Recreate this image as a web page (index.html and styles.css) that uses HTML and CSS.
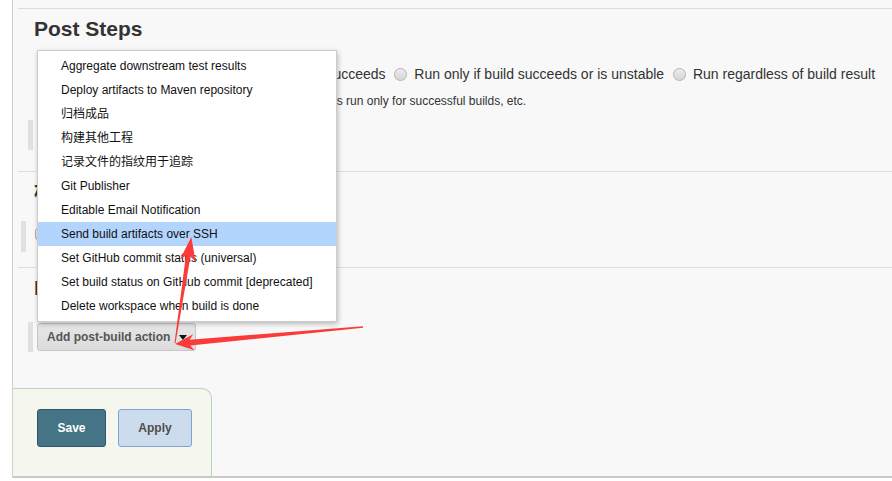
FILE: index.html
```html
<!DOCTYPE html>
<html lang="en">
<head>
<meta charset="utf-8">
<title>Post Steps</title>
<link rel="stylesheet" href="styles.css">
</head>
<body>
<div class="screen">
  <div class="page">
    <section class="section section-post">
      <h2 class="section-title">Post Steps</h2>
      <div class="opts">
        <div class="opts-row"><input class="radio" type="radio" name="ps"> Run only if build succeeds <input class="radio" type="radio" name="ps"> Run only if build succeeds or is unstable <input class="radio" type="radio" name="ps"> Run regardless of build result</div>
        <div class="opts-help">Should the post-build steps run only for successful builds, etc.</div>
      </div>
      <div class="repeat repeat-post">
        <span class="handle"></span>
        <button class="btn-add" type="button">Add step<span class="caret"></span></button>
      </div>
    </section>
    <section class="section section-settings">
      <h2 class="section-title">构建设置</h2>
      <div class="repeat repeat-check">
        <span class="handle"></span>
        <input class="checkbox" type="checkbox" aria-label="E-mail Notification">
      </div>
    </section>
    <section class="section section-actions">
      <h2 class="section-title">Post-build Actions</h2>
      <div class="repeat repeat-actions">
        <span class="handle"></span>
        <button class="btn-add" type="button">Add post-build action<span class="caret"></span></button>
      </div>
    </section>
    <div class="bottom-bar">
      <button class="btn btn-save" type="button">Save</button>
      <button class="btn btn-apply" type="button">Apply</button>
    </div>
  </div>

  <ul class="menu">
    <li class="menu-item">Aggregate downstream test results</li>
    <li class="menu-item">Deploy artifacts to Maven repository</li>
    <li class="menu-item">归档成品</li>
    <li class="menu-item">构建其他工程</li>
    <li class="menu-item">记录文件的指纹用于追踪</li>
    <li class="menu-item">Git Publisher</li>
    <li class="menu-item">Editable Email Notification</li>
    <li class="menu-item is-active">Send build artifacts over SSH</li>
    <li class="menu-item">Set GitHub commit status (universal)</li>
    <li class="menu-item">Set build status on GitHub commit [deprecated]</li>
    <li class="menu-item">Delete workspace when build is done</li>
  </ul>

  <svg class="arrows" width="892" height="481" viewBox="0 0 892 481" aria-hidden="true">
    <polygon points="174.5,342.9 185.9,255.4 180,259.5 191.3,237 195.6,261.9 190.5,256.2 175.5,343.1"/>
    <polygon points="362.9,326.3 189.6,339.7 193.2,334.3 175,344 194.6,350.3 190.2,345.6 363.1,327.7"/>
  </svg>
</div>
</body>
</html>
```

FILE: styles.css
```css
* { box-sizing: border-box; }
html, body { margin: 0; background: #fff; }
body {
  font-family: "Liberation Sans", Arial, "Noto Sans CJK SC", sans-serif;
  color: #333;
}
.screen {
  position: relative;
  width: 892px;
  height: 481px;
  overflow: hidden;
}
.page {
  margin-left: 12px;
  height: 478px;
  border-left: 1px solid #cfcfcf;
  border-bottom: 2px solid #c9c9c9;
  background: #f8f8f8;
  display: flex;
  flex-direction: column;
  padding-top: 8px;
}
.section {
  margin-left: 5px;
  border-top: 1px solid #dddddd;
  padding-left: 16px;
}
.section-title {
  margin: 8px 0 0;
  font-size: 21px;
  line-height: 24px;
  font-weight: bold;
  color: #333;
}
.section-post { padding-bottom: 21px; }
.section-post .section-title { margin-top: 8px; }
.section-settings { padding-bottom: 15px; }

.opts {
  display: grid;
  grid-template-columns: 164px auto;
  margin-top: 23px;
}
.opts-row {
  grid-column: 2;
  font-size: 14px;
  line-height: 20px;
  white-space: nowrap;
  color: #333;
}
.opts-help {
  grid-column: 2;
  margin-top: 9px;
  font-size: 12px;
  line-height: 16px;
  color: #333;
  white-space: nowrap;
}
.radio {
  -webkit-appearance: none;
  appearance: none;
  width: 13px;
  height: 13px;
  margin: 0 3px 0 5px;
  vertical-align: -2px;
  border-radius: 50%;
  border: 1px solid #b4b4b4;
  background: linear-gradient(#ececec, #d6d6d6);
}

.repeat { display: flex; align-items: flex-start; }
.handle {
  width: 5px;
  background: #e0e0e0;
  align-self: stretch;
}
.repeat-post { margin-top: 11px; margin-left: -6px; height: 30px; }
.repeat-check { margin-top: 17px; margin-left: -13px; height: 31px; }
.repeat-actions { margin-top: 22px; margin-left: -6px; height: 30px; }

.btn-add {
  margin: 1px 0 0 4px;
  height: 28px;
  padding: 0 8px 0 9px;
  border: 1px solid #c6c6c6;
  border-radius: 3px;
  background: linear-gradient(#e6e6e6, #dcdcdc);
  font-family: "Liberation Sans", Arial, sans-serif;
  font-size: 12px;
  font-weight: bold;
  color: #555;
  display: flex;
  align-items: center;
}
.caret {
  width: 0;
  height: 0;
  margin-left: 9px;
  border-left: 4px solid transparent;
  border-right: 4px solid transparent;
  border-top: 5px solid #111;
}
.checkbox {
  -webkit-appearance: none;
  appearance: none;
  width: 12px;
  height: 12px;
  margin: 7px 0 0 9px;
  border: 1px solid #b0b0b0;
  border-radius: 3px;
  background: linear-gradient(#f2f2f2, #dedede);
}

.bottom-bar {
  margin-top: auto;
  width: 199px;
  height: 88px;
  border-top: 1px solid #b6d5bd;
  border-right: 1px solid #b6d5bd;
  border-top-right-radius: 10px;
  background: #f5f7ef;
  padding: 20px 0 0 24px;
  display: flex;
  gap: 12px;
  align-items: flex-start;
}
.btn {
  height: 38px;
  border-radius: 3px;
  font-family: "Liberation Sans", Arial, sans-serif;
  font-size: 12px;
  font-weight: bold;
  padding: 0;
}
.btn-save {
  width: 69px;
  background: #467487;
  border: 1px solid #2f5767;
  color: #fff;
}
.btn-apply {
  width: 74px;
  background: #cddced;
  border: 1px solid #7ea4d2;
  color: #4d4d4d;
}

.menu {
  position: absolute;
  top: 50px;
  left: 37px;
  width: 300px;
  height: 272px;
  margin: 0;
  padding: 3px 0;
  list-style: none;
  background: #fff;
  border: 1px solid #cccccc;
  box-shadow: 1px 2px 5px rgba(0, 0, 0, 0.25);
}
.menu-item {
  height: 24px;
  line-height: 24px;
  padding-left: 23px;
  font-size: 12px;
  color: #111;
  white-space: nowrap;
}
.menu-item.is-active { background: #b3d4fd; }

.arrows {
  position: absolute;
  top: 0;
  left: 0;
  pointer-events: none;
  fill: #fb3a3a;
}
```
